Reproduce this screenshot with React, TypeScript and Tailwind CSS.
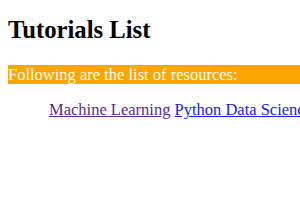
export default function App() {
  return (
    <div className="pl-2 overflow-hidden font-['Liberation_Serif',serif] text-black">
      <h1 className="text-[24.7px] font-bold leading-[28px] mt-[16px] mb-[16px]">Tutorials List</h1>
      <p className="bg-[#ffa500] text-white text-[16.5px] leading-[19px] mt-[21px]">Following are the list of resources:</p>
      <div className="ml-[41px] mt-[16px] text-[16.5px] leading-[19px] whitespace-nowrap">
        <a href="#" className="underline text-[#5b2a8e]">Machine Learning</a>{' '}
        <a href="#" className="underline text-[#1a1aee]">Python Data Science</a>
      </div>
    </div>
  );
}
